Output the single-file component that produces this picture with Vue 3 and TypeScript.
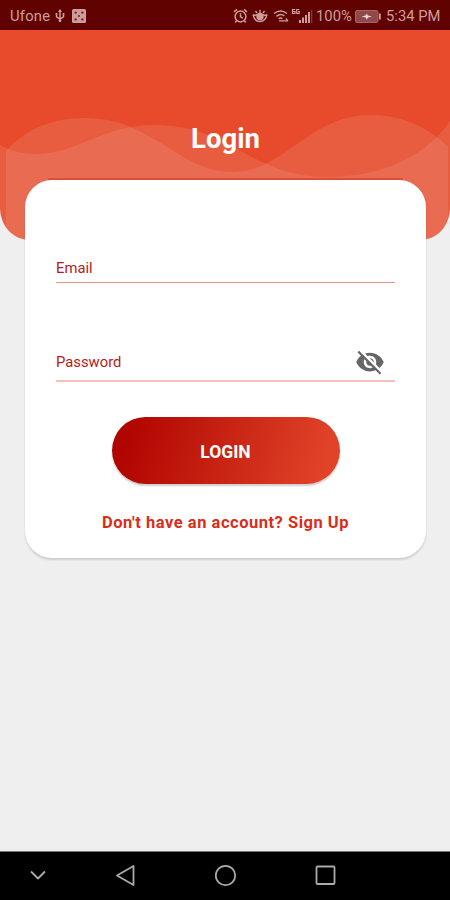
<script setup lang="ts">
import { ref } from 'vue'

const email = ref<string>('')
const password = ref<string>('')
</script>

<template>
  <div class="screen">
    <header class="status">
      <span class="carrier">Ufone</span>
      <svg class="usb" width="12" height="14" viewBox="0 0 12 16" fill="none" stroke="currentColor" stroke-width="1.7">
        <path d="M6 2v11M2 6v3l4 2.500L10 9V6" />
        <path d="M6 0l2.300 3.500H3.700zM1 4.500h2v2H1zM9 4.500h2v2H9z" fill="currentColor" stroke="none" />
        <circle cx="6" cy="13.500" r="1.600" fill="currentColor" stroke="none" />
      </svg>
      <svg class="dice" width="14" height="14" viewBox="0 0 14 14">
        <rect width="14" height="14" rx="1.500" fill="currentColor" />
        <g fill="#600300" opacity=".75">
          <circle cx="3.600" cy="3.600" r="1.200" /><circle cx="10.400" cy="3.600" r="1.200" />
          <circle cx="3.600" cy="10.400" r="1.200" /><circle cx="10.400" cy="10.400" r="1.200" />
          <circle cx="7" cy="7" r="1.100" />
        </g>
      </svg>
      <span class="spacer"></span>
      <svg class="alarm" width="15" height="16" viewBox="0 0 15 16" fill="none" stroke="currentColor" stroke-width="1.500">
        <circle cx="7.500" cy="8.500" r="5.400" />
        <path d="M7.500 5.200v3.600l2.400 1.400M1 3.800l3-2.500M14 3.800l-3-2.500M3.600 12.700l-1.400 1.700M11.400 12.700l1.400 1.700" />
      </svg>
      <svg class="eye" width="16" height="16" viewBox="0 0 16 16" fill="none" stroke="currentColor" stroke-width="1.400">
        <path d="M1 6.500Q2.500 13.500 8 13.500T15 6.500M1 6.500Q3.500 8 5 6.500M15 6.500Q12.500 8 11 6.500M8 5V1.800M5 5L3.500 2.800M11 5l1.500-2.200" />
        <circle cx="8" cy="8.500" r="3" fill="currentColor" />
      </svg>
      <svg class="wifi" width="16" height="14" viewBox="0 0 16 14" fill="none" stroke="currentColor" stroke-width="1.500">
        <path d="M1 4.500Q7.500-.7 14 4.500M3.400 7.300Q7.500 4 11.500 7M5.600 9.700Q7.500 8.200 9.400 9.700" />
        <path d="M6 11.800h9M12.800 9.500l2.200 2.300" stroke-width="1.200" />
      </svg>
      <svg class="signal" width="23" height="16" viewBox="0 0 23 16" fill="currentColor">
        <path d="M8 12h2v3H8zM11 9.500h2V15h-2zM14 7h2v8h-2zM17 4h2v11h-2z" />
        <path d="M20 2h1.300v13H20z" opacity=".35" />
        <path d="M4.200 1.500H1.500V5.500h2.500V3.500H2M8.200 1.500H5.700V5.500h2.500V3.500H7" fill="none" stroke="currentColor" stroke-width="1.200" />
      </svg>
      <span class="percent">100%</span>
      <svg class="battery" width="26" height="13" viewBox="0 0 26 13">
        <rect x=".5" y=".5" width="22.500" height="12" rx="1.500" fill="#90494a" stroke="#a66665" />
        <path d="M24 3.500h1.800v6H24z" fill="currentColor" />
        <path d="M6.500 6.500l4-1 1.300-2 1 2 4.200 1-4 1-1.200 2-1.200-2z" fill="#efd5d4" />
      </svg>
      <span class="clock">5:34 PM</span>
    </header>

    <main class="page">
      <svg class="hero" width="450" height="210" viewBox="0 30 450 210">
        <defs>
          <clipPath id="heroShape"><path d="M0 30H450V207C450 225 438 240 419 240H31C12 240 0 225 0 207Z" /></clipPath>
        </defs>
        <g clip-path="url(#heroShape)">
          <rect y="30" width="450" height="210" fill="#e74b2b" />
          <g fill="#f4c8c0" fill-opacity=".145">
            <path d="M6 240V151C24 130 52 118 83 118C107 118 125 123 143 133C181 153 199 173 235 172C284 171 310 115 370 115C407 115 432 131 448 147V240Z" />
            <path d="M0 145C10 151 22 154 36 154C77 154 103 125 154 125C207 125 233 149 264 163C285 173 308 178 332 177C386 176 429 153 450 121V240H0Z" />
          </g>
          <path d="M48 179H403" stroke="#d94528" stroke-width="1.500" />
        </g>
      </svg>

      <div class="content">
        <h1>Login</h1>
        <form class="card" @submit.prevent>
          <label class="field email">
            <input v-model="email" type="email" placeholder="Email" />
          </label>
          <label class="field password">
            <input v-model="password" type="password" placeholder="Password" />
            <svg class="toggle" width="30" height="30" viewBox="0 0 24 24" fill="#666">
              <path d="M12 7c2.760 0 5 2.240 5 5 0 .65-.13 1.260-.36 1.830l2.920 2.920c1.510-1.260 2.700-2.890 3.430-4.750-1.730-4.390-6-7.500-11-7.500-1.400 0-2.740.25-3.980.7l2.160 2.160C10.740 7.130 11.350 7 12 7zM2 4.270l2.280 2.280.46.46C3.080 8.300 1.780 10.020 1 12c1.730 4.390 6 7.500 11 7.500 1.550 0 3.030-.3 4.380-.84l.42.42L19.730 22 21 20.730 3.270 3 2 4.270zM7.530 9.800l1.550 1.550c-.05.21-.08.43-.08.65 0 1.660 1.340 3 3 3 .22 0 .44-.03.65-.08l1.550 1.550c-.67.33-1.410.53-2.200.53-2.760 0-5-2.240-5-5 0-.79.2-1.530.53-2.200zm4.310-.78l3.150 3.150.02-.16c0-1.660-1.340-3-3-3l-.17.01z" />
            </svg>
          </label>
          <button class="submit" type="submit">LOGIN</button>
          <a class="signup">Don't have an account? Sign Up</a>
        </form>
      </div>
    </main>

    <nav class="navbar">
      <svg width="76" height="48" viewBox="0 0 76 48"><path d="M31 19.500l7 7 7-7" /></svg>
      <svg width="100" height="48" viewBox="0 0 100 48"><path d="M57.500 14v19L41 23.500z" /></svg>
      <svg width="100" height="48" viewBox="0 0 100 48"><circle cx="49.500" cy="23.500" r="9.700" /></svg>
      <svg width="100" height="48" viewBox="0 0 100 48"><rect x="40.500" y="14.500" width="18" height="17.500" rx="1" /></svg>
    </nav>
  </div>
</template>

<style>
body {
  margin: 0;
}
</style>

<style scoped>
.screen {
  width: 450px;
  height: 900px;
  display: flex;
  flex-direction: column;
  overflow: hidden;
  background: #efefef;
  font-family: Roboto, "Liberation Sans", sans-serif;
}
.status {
  flex: none;
  box-sizing: border-box;
  height: 30px;
  padding: 2px 10px 0;
  display: flex;
  align-items: center;
  background: #600300;
  color: #cf9d9b;
  font-size: 14.8px;
  line-height: 28px;
  white-space: nowrap;
}
.status svg {
  flex: none;
}
.carrier {
  width: 44px;
  letter-spacing: 0.2px;
}
.dice {
  margin-left: 6px;
}
.spacer {
  flex: 1;
}
.eye {
  margin-left: 4px;
}
.wifi {
  margin-left: 5px;
}
.signal {
  margin-left: 2px;
}
.percent {
  width: 36px;
  margin-left: 2px;
}
.battery {
  margin-left: 3px;
}
.clock {
  width: 54px;
  margin-left: 5px;
}
.page {
  flex: 1;
  display: grid;
  align-items: start;
}
.hero,
.content {
  grid-area: 1 / 1;
}
.content {
  display: flex;
  flex-direction: column;
  padding: 0 24px 0 25px;
}
h1 {
  margin: 90px 0 24px;
  height: 36px;
  line-height: 37px;
  font-size: 27.5px;
  font-weight: 700;
  text-align: center;
  color: #fff;
}
.card {
  box-sizing: border-box;
  height: 378px;
  padding: 72px 31px 0;
  display: flex;
  flex-direction: column;
  align-items: center;
  background: #fff;
  border-radius: 27px;
  box-shadow: 0 2px 2px rgba(0, 0, 0, 0.14);
}
.field {
  box-sizing: border-box;
  width: 100%;
  display: flex;
  align-items: center;
}
.email {
  height: 31px;
  padding-top: 2px;
  border-bottom: 1.5px solid #e79187;
}
.password {
  height: 40px;
  margin-top: 59px;
  padding: 2px 10px 0 0;
  border-bottom: 2px solid #f7bfbc;
}
input {
  flex: 1;
  min-width: 0;
  padding: 0;
  border: 0;
  outline: 0;
  background: transparent;
  font: 400 14.8px/20px Roboto, "Liberation Sans", sans-serif;
  color: #b51a1c;
}
input::placeholder {
  color: #b51a1c;
  opacity: 1;
}
.submit {
  width: 228px;
  height: 67px;
  margin-top: 35px;
  padding: 2px 0 0;
  border: 0;
  border-radius: 34px;
  background: linear-gradient(105deg, #b00500 8%, #e14328 92%);
  box-shadow: 0 2px 2px rgba(0, 0, 0, 0.2);
  font: 700 17.5px Roboto, "Liberation Sans", sans-serif;
  color: #fff;
}
.signup {
  margin-top: 29px;
  font-size: 16.5px;
  line-height: 20px;
  font-weight: 700;
  letter-spacing: 0.52px;
  color: #db2c1b;
  white-space: nowrap;
}
.navbar {
  flex: none;
  box-sizing: border-box;
  height: 49px;
  border-top: 1px solid #777;
  display: flex;
  background: #000;
}
.navbar path,
.navbar circle,
.navbar rect {
  fill: none;
  stroke: #aaa;
  stroke-width: 1.8;
  stroke-linejoin: round;
}
</style>
